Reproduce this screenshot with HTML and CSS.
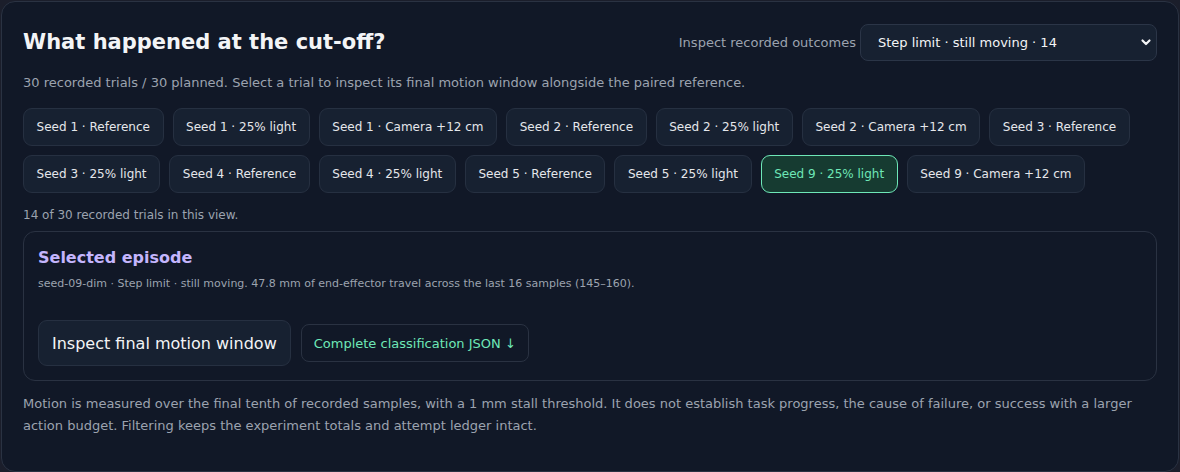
FILE: index.html
```html
<!DOCTYPE html>
<html lang="en">
<head>
    <meta charset="UTF-8">
    <meta name="viewport" content="width=device-width, initial-scale=1.0">
    <title>What happened at the cut-off?</title>
    <link rel="stylesheet" href="styles.css">
</head>
<body>
    <section class="panel">
        <div class="panel-head">
            <h2>What happened at the cut-off?</h2>
            <label class="filter">
                <span>Inspect recorded outcomes</span>
                <select id="outcome">
                    <option>Step limit · still moving · 14</option>
                    <option>Step limit · stalled · 6</option>
                    <option>Success · 10</option>
                </select>
            </label>
        </div>
        <p class="lead">30 recorded trials / 30 planned. Select a trial to inspect its final motion window alongside the paired reference.</p>

        <div class="trials">
            <button class="trial">Seed 1 · Reference</button>
            <button class="trial">Seed 1 · 25% light</button>
            <button class="trial">Seed 1 · Camera +12 cm</button>
            <button class="trial">Seed 2 · Reference</button>
            <button class="trial">Seed 2 · 25% light</button>
            <button class="trial">Seed 2 · Camera +12 cm</button>
            <button class="trial">Seed 3 · Reference</button>
            <button class="trial">Seed 3 · 25% light</button>
            <button class="trial">Seed 4 · Reference</button>
            <button class="trial">Seed 4 · 25% light</button>
            <button class="trial">Seed 5 · Reference</button>
            <button class="trial">Seed 5 · 25% light</button>
            <button class="trial active">Seed 9 · 25% light</button>
            <button class="trial">Seed 9 · Camera +12 cm</button>
        </div>
        <p class="count">14 of 30 recorded trials in this view.</p>

        <div class="episode">
            <h3>Selected episode</h3>
            <p class="episode-desc">seed-09-dim · Step limit · still moving. 47.8 mm of end-effector travel across the last 16 samples (145–160).</p>
            <div class="episode-actions">
                <button class="inspect-btn">Inspect final motion window</button>
                <a class="json-link" href="#">Complete classification JSON ↓</a>
            </div>
        </div>

        <p class="note">Motion is measured over the final tenth of recorded samples, with a 1 mm stall threshold. It does not establish task progress, the cause of failure, or success with a larger action budget. Filtering keeps the experiment totals and attempt ledger intact.</p>
    </section>
</body>
</html>
```

FILE: styles.css
```css
body {
    margin: 0;
    padding: 1px;
    background-color: #1b1e2b;
    font-family: "DejaVu Sans", sans-serif;
    color: #e5e7eb;
}

.panel {
    background: #111827;
    border: 1px solid #2a3242;
    border-radius: 14px;
    padding: 21px 21px 34px;
}

.panel-head {
    display: flex;
    align-items: center;
    justify-content: space-between;
    height: 38px;
}

.panel-head h2 {
    margin: 0;
    font-size: 21px;
    font-weight: bold;
    color: #f3f4f6;
}

.filter {
    display: flex;
    align-items: center;
    gap: 4px;
    font-size: 13px;
    color: #9ca3af;
}

.filter select {
    appearance: none;
    width: 297px;
    height: 37px;
    padding: 0 34px 0 17px;
    font-family: inherit;
    font-size: 13px;
    color: #f3f4f6;
    background-color: #172131;
    background-image: url("data:image/svg+xml,%3Csvg xmlns='http://www.w3.org/2000/svg' width='12' height='8' viewBox='0 0 12 8'%3E%3Cpath d='M2.5 2.5l3.5 3.5 3.5-3.5' fill='none' stroke='%23f3f4f6' stroke-width='2.2' stroke-linecap='round' stroke-linejoin='round'/%3E%3C/svg%3E");
    background-repeat: no-repeat;
    background-position: right 4px center;
    border: 1px solid #2b3547;
    border-radius: 8px;
}

.lead {
    margin: 12px 0 0;
    font-size: 13px;
    line-height: 20px;
    color: #9ca3af;
}

.trials {
    display: flex;
    flex-wrap: wrap;
    gap: 9px;
    margin-top: 15px;
}

.trial {
    height: 38px;
    padding: 0 12.6px;
    font-family: inherit;
    font-size: 12px;
    color: #e5e7eb;
    background: #172131;
    border: 1px solid #263041;
    border-radius: 9px;
    cursor: pointer;
}

.trial.active {
    background: #163b31;
    border-color: #6ee7b7;
    color: #6ee7b7;
}

.count {
    margin: 13px 0 0;
    font-size: 12px;
    line-height: 18px;
    color: #9ca3af;
}

.episode {
    margin-top: 7px;
    border: 1px solid #2a3242;
    border-radius: 12px;
    padding: 15px 14px 14px;
}

.episode h3 {
    margin: 0;
    font-size: 16px;
    line-height: 22px;
    color: #c4b5fd;
}

.episode-desc {
    margin: 7px 0 0;
    font-size: 11px;
    line-height: 16px;
    color: #9ca3af;
}

.episode-actions {
    display: flex;
    align-items: center;
    gap: 10px;
    margin-top: 28px;
}

.inspect-btn {
    height: 46px;
    padding: 0 13px;
    font-family: inherit;
    font-size: 16px;
    color: #f3f4f6;
    background: #172131;
    border: 1px solid #263041;
    border-radius: 9px;
    cursor: pointer;
}

.json-link {
    display: flex;
    align-items: center;
    height: 36px;
    padding: 0 12px;
    font-size: 13px;
    color: #6ee7b7;
    text-decoration: none;
    border: 1px solid #2a3242;
    border-radius: 8px;
}

.note {
    margin: 12px 0 0;
    font-size: 13px;
    line-height: 22px;
    color: #9ca3af;
}
```
